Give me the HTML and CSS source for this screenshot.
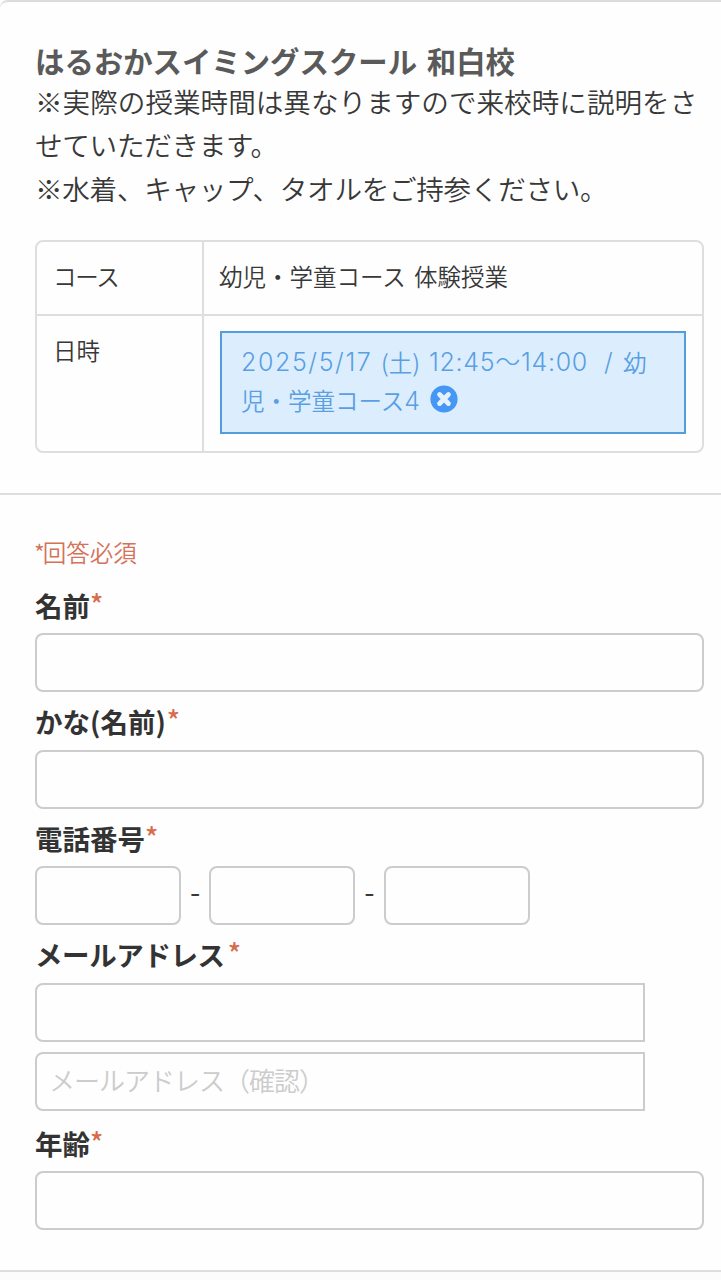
FILE: index.html
```
<!DOCTYPE html>
<html lang="ja">
<head>
<meta charset="utf-8">
<title>はるおかスイミングスクール 和白校</title>
<link rel="stylesheet" href="styles.css">
</head>
<body>
<main class="page">
  <section class="summary">
    <h1 class="school">はるおかスイミングスクール 和白校</h1>
    <p class="notes">※実際の授業時間は異なりますので来校時に説明をさ<br><span class="note-tight">せていただきます。</span><br><span class="note-tight">※水着、キャップ、タオルをご持参ください。</span></p>
    <div class="table">
      <div class="row row-course">
        <div class="head"><span class="kana-tight">コース</span></div>
        <div class="cell">幼児・学童コース 体験授業</div>
      </div>
      <div class="row row-date">
        <div class="head">日時</div>
        <div class="cell">
          <div class="slot">
            <div class="slot-line"><span class="date">2025/5/17</span><span class="day">(土)</span><span class="time">12:45〜14:00</span><span class="slash">/</span><span>幼</span></div>
            <div class="slot-line"><span class="slot-course">児・学童コース<span class="num">4</span></span><svg class="remove" viewBox="0 0 28 28"><circle cx="14" cy="14" r="13.6" fill="#4596f5"/><path d="M9.6 9.6L18.4 18.4M18.4 9.6L9.6 18.4" stroke="#e4f1fd" stroke-width="4.9" stroke-linecap="round"/></svg></div>
          </div>
        </div>
      </div>
    </div>
  </section>
  <form class="form">
    <p class="required-note"><span class="note-star">*</span>回答必須</p>
    <div class="field"><label class="label">名前<span class="req">*</span></label><input class="input" type="text"></div>
    <div class="field"><label class="label">かな(名前)<span class="req req-gap">*</span></label><input class="input" type="text"></div>
    <div class="field"><label class="label">電話番号<span class="req">*</span></label>
      <div class="phone"><input class="input" type="text"><span class="dash">-</span><input class="input" type="text"><span class="dash">-</span><input class="input" type="text"></div>
    </div>
    <div class="field field-mail"><label class="label"><span class="mail-label">メールアドレス</span><span class="req req-mail">*</span></label>
      <input class="input mail" type="text"><input class="input mail" type="text" placeholder="メールアドレス（確認）">
    </div>
    <div class="field field-age"><label class="label">年齢<span class="req">*</span></label><input class="input" type="text"></div>
  </form>
</main>
</body>
</html>
```

FILE: styles.css
```
* { box-sizing: border-box; }
body {
  margin: 0;
  background: #fcfcfc;
  color: #383838;
  font-family: "Noto Sans CJK JP", sans-serif;
  font-weight: 350;
}
.page {
  height: 1272px;
  overflow: hidden;
  background: #fefefe;
  border-top: 2px solid #dcdcdc;
  border-bottom: 2px solid #dedede;
  border-top-left-radius: 8px;
}
.summary {
  height: 493px;
  padding: 37px 17px 0 35px;
  border-bottom: 2px solid #dedede;
}
.school {
  margin: 0;
  font-size: 29.4px;
  line-height: 42px;
  font-weight: 700;
  color: #5a5a5a;
  white-space: nowrap;
  word-spacing: 3px;
}
.notes {
  margin: -1px 0 0;
  height: 160px;
  font-size: 27.6px;
  line-height: 43.3px;
  white-space: nowrap;
}
.note-tight { letter-spacing: -0.3px; }
.table {
  width: 669px;
  height: 213px;
  border: 2px solid #dedede;
  border-radius: 8px;
  font-size: 23.5px;
}
.row { display: flex; }
.row-course { height: 74px; border-bottom: 2px solid #dedede; }
.row-date { height: 135px; }
.head {
  width: 167px;
  padding: 17px 0 0 16px;
  border-right: 2px solid #dedede;
  line-height: 34px;
}
.kana-tight { letter-spacing: -1.3px; }
.cell {
  flex: 1;
  padding: 17px 15px 0 15px;
  line-height: 34px;
  word-spacing: 3px;
}
.row-date .cell { padding: 15px 16px 0; }
.slot {
  height: 103px;
  padding: 9px 0 0 19px;
  border: 2px solid #549ddd;
  background: #dceefd;
  color: #5a9fe3;
}
.slot-line {
  display: flex;
  align-items: center;
  height: 39px;
  white-space: nowrap;
}
.date, .time, .num, .slash {
  font-family: Inter, "Noto Sans CJK JP", sans-serif;
  font-weight: 300;
  font-size: 25px;
}
.date { width: 140px; letter-spacing: 1.6px; }
.day { width: 48px; }
.time { width: 175px; letter-spacing: 0.7px; }
.slash { width: 19px; }
.slot-course { width: 189px; }
.remove { width: 28px; height: 28px; margin-top: -3px; }
.form { padding: 40px 17px 0 35px; }
.required-note {
  margin: 0;
  height: 41px;
  font-size: 23.5px;
  line-height: 35px;
  color: #d2735a;
}
.note-star { margin: 0 -2px 0 -1px; }
.field { display: flex; flex-direction: column; height: 116.4px; }
.label {
  height: 57.4px;
  flex: none;
  padding-top: 9px;
  font-size: 27.5px;
  line-height: 40px;
  font-weight: 700;
  color: #333;
}
.req {
  font-weight: 500;
  color: #d76c4c;
  display: inline-block;
  line-height: 1;
  transform: translateY(-2px);
}
.req-gap { margin-left: 1px; }
.req-mail { margin-left: 3px; }
.mail-label { letter-spacing: -0.4px; }
.input {
  display: block;
  width: 669px;
  height: 59px;
  flex: none;
  margin: 0;
  padding: 0 14px 3px 12px;
  border: 2px solid #ccc;
  border-radius: 8px;
  background: #fefefe;
  font: 350 26px "Noto Sans CJK JP", sans-serif;
  outline: none;
}
.input::placeholder { color: #ccc; letter-spacing: -1px; }
.phone { display: flex; }
.phone .input { width: 146px; }
.dash {
  width: 28.3px;
  text-align: center;
  font-size: 30px;
  line-height: 48px;
}
.field-mail { height: 185px; }
.mail { width: 610px; border-radius: 8px 0 0 8px; }
.mail + .mail { margin-top: 10px; }
.field-age .label { padding-top: 13px; height: 61px; }
```
